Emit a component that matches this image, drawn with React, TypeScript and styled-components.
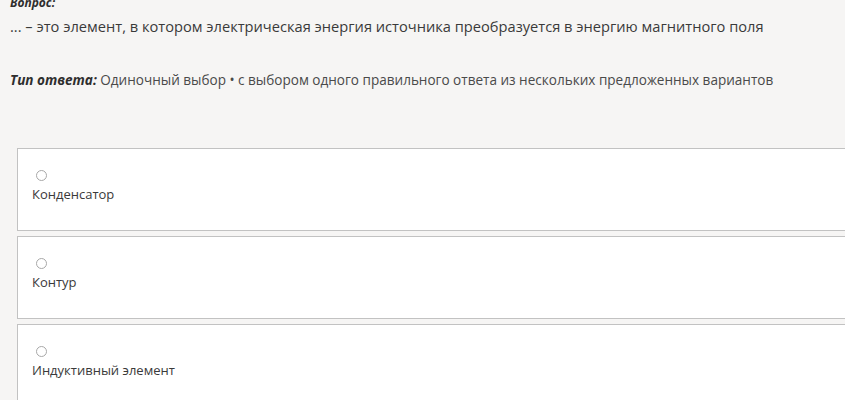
import React, { FC } from "react";
import styled, { createGlobalStyle } from "styled-components";

const GlobalStyle = createGlobalStyle`
  html, body {
    margin: 0;
    padding: 0;
    background: #f6f5f4;
    overflow: hidden;
  }
  body {
    font-family: "Open Sans", "Noto Sans", sans-serif;
    color: #333333;
  }
`;

const Page = styled.div`
  width: 845px;
  height: 400px;
  overflow: hidden;
  padding: 0 0 0 10px;
  box-sizing: border-box;
`;

const Label = styled.div`
  font-size: 12px;
  font-weight: 700;
  font-style: italic;
  color: #2e2e2e;
  line-height: 14px;
  margin-top: -4px;
`;

const Question = styled.div`
  font-size: 14.65px;
  line-height: 20px;
  margin-top: 6px;
  color: #3a3a3a;
  white-space: nowrap;
`;

const AnswerType = styled.div`
  font-size: 13.55px;
  line-height: 20px;
  margin-top: 34px;
  color: #4a4a4a;
  white-space: nowrap;

  b {
    font-weight: 700;
    font-style: italic;
    color: #2e2e2e;
  }
`;

const Options = styled.div`
  display: flex;
  flex-direction: column;
  gap: 5px;
  margin-top: 58px;
  margin-left: 7px;
  width: 840px;
`;

const OptionCard = styled.label`
  display: flex;
  flex-direction: column;
  align-items: flex-start;
  gap: 4px;
  height: 83px;
  box-sizing: border-box;
  padding: 21px 14px 0;
  background: #ffffff;
  border: 1.5px solid #c2c2c2;
`;

const Radio = styled.span`
  width: 9px;
  height: 9px;
  margin-left: 4px;
  border: 1px solid #a8a8a8;
  border-radius: 50%;
  background: #fff;
`;

const OptionText = styled.span`
  font-size: 13px;
  line-height: 18px;
  color: #3a3a3a;
`;

interface OptionProps {
  text: string;
}

const Option: FC<OptionProps> = ({ text }) => (
  <OptionCard>
    <Radio />
    <OptionText>{text}</OptionText>
  </OptionCard>
);

const options = ["Конденсатор", "Контур", "Индуктивный элемент"];

export default function App() {
  return (
    <>
      <GlobalStyle />
      <Page>
        <Label>Вопрос:</Label>
        <Question>
          ... – это элемент, в котором электрическая энергия источника преобразуется в энергию магнитного поля
        </Question>
        <AnswerType>
          <b>Тип ответа:</b> Одиночный выбор • с выбором одного правильного ответа из нескольких предложенных вариантов
        </AnswerType>
        <Options>
          {options.map((o) => (
            <Option key={o} text={o} />
          ))}
        </Options>
      </Page>
    </>
  );
}
